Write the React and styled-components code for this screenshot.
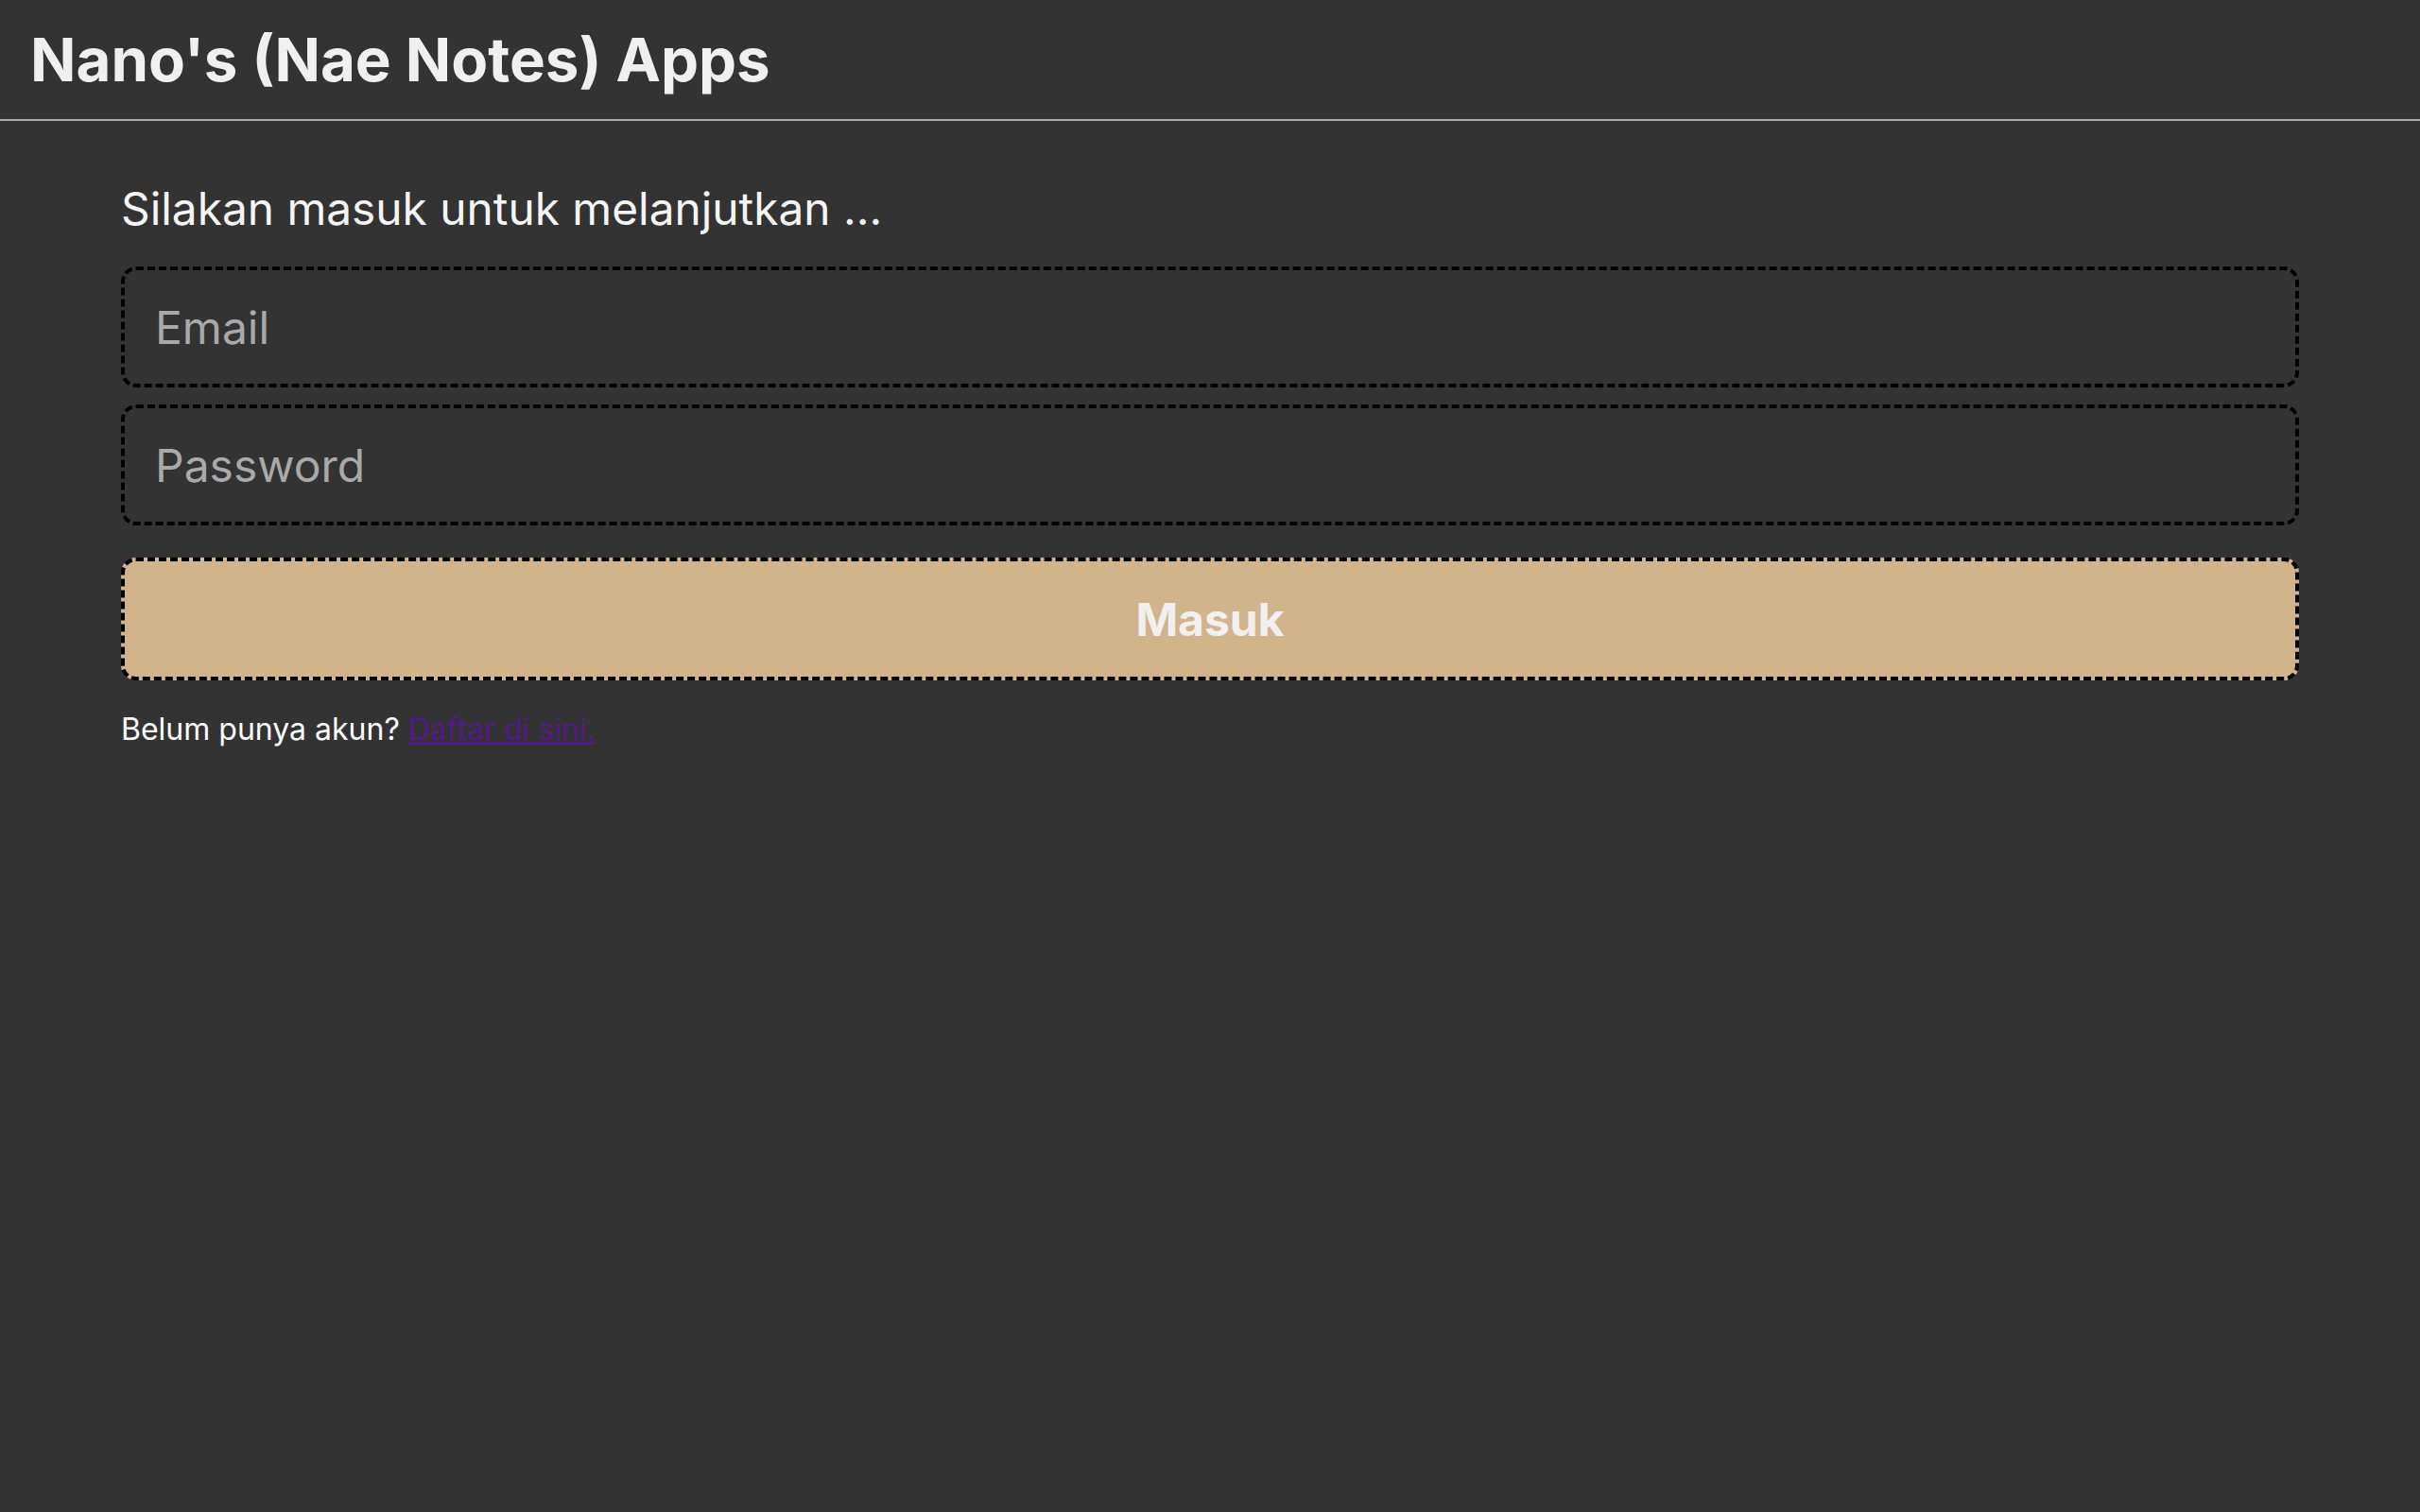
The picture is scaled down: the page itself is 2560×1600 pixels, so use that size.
import styled, { createGlobalStyle } from "styled-components";

const GlobalStyle = createGlobalStyle`
  * {
    box-sizing: border-box;
  }

  body {
    margin: 0;
    background-color: #333333;
    color: #f0f0f0;
    font-family: Inter, "Noto Sans", sans-serif;
  }
`;

/**
 * Render login page
 * @return { JSX }
 */

export default function App() {
  return (
    <>
      <GlobalStyle />
      <Header>
        <Title>Nano's (Nae Notes) Apps</Title>
      </Header>
      <Main>
        <Subtitle>Silakan masuk untuk melanjutkan ...</Subtitle>
        <LoginForm onSubmit={(e) => e.preventDefault()}>
          <Input type="email" placeholder="Email" />
          <Input type="password" placeholder="Password" $last />
          <SubmitButton type="submit">Masuk</SubmitButton>
        </LoginForm>
        <Footnote>
          Belum punya akun? <RegisterLink href="#register">Daftar di sini.</RegisterLink>
        </Footnote>
      </Main>
    </>
  );
}

const Header = styled.header`
  padding: 24px 32px 25px;
  border-bottom: 2px solid #aaaaaa;
`;

const Title = styled.h1`
  margin: 0;
  font-size: 63.6px;
  font-weight: 700;
  line-height: 77px;
  color: #f0f0f0;
`;

const Main = styled.main`
  padding: 64px 128px;
`;

const Subtitle = styled.h2`
  margin: 0 0 32px;
  font-size: 47.8px;
  font-weight: 400;
  line-height: 58px;
  color: #f5f5f5;
`;

const LoginForm = styled.form`
  display: flex;
  flex-direction: column;
`;

const Input = styled.input`
  height: 128px;
  margin-bottom: ${(props) => (props.$last ? "34px" : "18px")};
  padding: 0 32px;
  border: 4px dashed #000000;
  border-radius: 16px;
  background-color: transparent;
  color: #f0f0f0;
  font-family: inherit;
  font-size: 48px;
  outline: none;

  &::placeholder {
    color: #a9a9a9;
  }
`;

const SubmitButton = styled.button`
  height: 130px;
  border: 4px dashed #000000;
  border-radius: 16px;
  background-color: #d2b48c;
  color: #f0f0f0;
  font-family: inherit;
  font-size: 48px;
  font-weight: 700;
  cursor: pointer;
`;

const Footnote = styled.p`
  margin: 32px 0 0;
  font-size: 32px;
  line-height: 39px;
  color: #ffffff;
`;

const RegisterLink = styled.a`
  color: #551a8b;
  text-decoration: underline;
`;
